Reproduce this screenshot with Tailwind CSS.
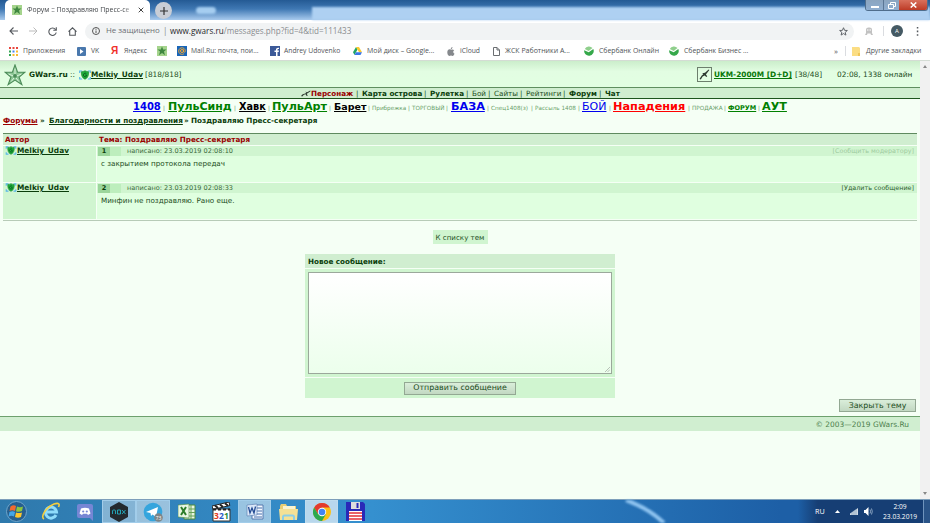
<!DOCTYPE html>
<html lang="ru">
<head>
    <meta charset="UTF-8">
    <meta name="viewport" content="width=device-width, initial-scale=1.0">
    <title>Форум :: Поздравляю Пресс-секретаря</title>
    <script src="https://cdn.jsdelivr.net/npm/@tailwindcss/browser@4"></script>
</head>
<body class="w-[930px] h-[523px] overflow-hidden flex flex-col whitespace-nowrap bg-[#f5fff5] font-['Open_Sans','Noto_Sans',sans-serif]">

    <!-- Shared icons -->
    <svg class="hidden">
        <symbol id="star" viewBox="0 0 24 24">
            <path d="M12 1l2.800 8h8l-6.300 5.300 3 8.200-7.500-5-7.500 5 3-8.200L1.200 9h8z" fill="#8cc795" stroke="#4b8b58" stroke-width="1.200"/>
            <path d="M12 5v6M5 11l5 2M19 11l-5 2M8 19l3-4M16 19l-3-4" stroke="#e2f8e2" fill="none"/>
            <circle cx="12" cy="13" r="2" fill="#4b8b58"/>
        </symbol>
        <symbol id="favicon" viewBox="0 0 10 10">
            <path d="M0 0h10v10H0z" fill="#a5d48d"/>
            <path d="M5 .5l1.200 3h3.300L7 5.500l1 3.800-3-2.200-3 2.200 1-3.800L.5 3.500h3.300z" fill="#3f8740"/>
        </symbol>
        <symbol id="shield" viewBox="0 0 12 10">
            <path d="M.7 3V1h2.500M8.800 1h2.500v2M.7 7v2h2.500M8.800 9h2.500V7" fill="none" stroke="#59b5e8" stroke-width="1.200"/>
            <path d="M6 .7c1.500.8 2.500 1 3.600 1C9.800 5 9 8 6 9.300 3 8 2.200 5 2.400 1.700c1.100 0 2.100-.2 3.600-1z" fill="#1fae3d" stroke="#128028" stroke-width=".6"/>
            <path d="M7.400 3.700a1.800 1.800 0 1 0 0 2.600V5H6.200" fill="none" stroke="#07551a" stroke-width=".8"/>
        </symbol>
        <symbol id="rifle" viewBox="0 0 12 8">
            <path d="M0 7l2-2 3-1 6-3.500.5.7L7 4.200 8 7H6.800L5.500 5 3.500 5.500 1.500 7.500zM5 2l3 .5-1 1z" fill="#2d3a30"/>
        </symbol>
        <symbol id="rifle-up" viewBox="0 0 12 12">
            <path d="M.5 11l2.500-4 2-1.500L10.500.5l.8.600L7.500 6l1.500 2-1 .8L6.200 7 4 8.200 2 11.500zM3.500 4.500l3-.5-1.500 2z" fill="#2d3a30"/>
        </symbol>
        <symbol id="sber" viewBox="0 0 10 10">
            <path d="M.2 4.200L4.700 6.300 9.300 3a4.800 4.800 0 1 1-9.100 1.200z" fill="#35a84a"/>
            <path d="M.8 3L4.700 5 8.500 2A4.800 4.800 0 0 0 .8 3z" fill="#8fcf8c"/>
        </symbol>
    </svg>

    <!-- Window title and tabs -->
    <div class="relative h-[20px] shrink-0 flex items-end bg-linear-to-b from-[#245a94] via-[#3f78b3] via-45% to-[#a9cbee] pl-[5px]">
        <div class="absolute left-[312px] right-0 top-[7px] bottom-0 bg-[#aed0f2] blur-[1px]"></div>
        <div class="absolute left-[196px] top-[7px] w-[20px] h-[7px] rounded-sm bg-[#a5cdf0] blur-[1px]"></div>
        <div class="relative w-[145px] h-[20px] bg-white rounded-t-[5px] flex items-center pl-[7px]">
            <svg class="w-[10px] h-[10px] mr-[5px]"><use href="#favicon"/></svg>
            <span class="w-[107px] text-[6.900px] text-[#45484c] mask-r-from-90%">Форум :: Поздравляю Пресс-се</span>
            <svg class="w-[6px] h-[6px] ml-[4px]" viewBox="0 0 6 6"><path d="M.7.7l4.600 4.600M5.300.7L.7 5.300" stroke="#444"/></svg>
        </div>
        <div class="relative ml-[5px] mb-[1px] w-[17px] h-[17px] rounded-full bg-[#c9ced6] flex items-center justify-center">
            <svg class="w-[8px] h-[8px]" viewBox="0 0 8 8"><path d="M4 0v8M0 4h8" stroke="#333" stroke-width="1.200"/></svg>
        </div>
        <div class="absolute right-[2px] top-0 flex h-[11px] rounded-b-[3px] overflow-hidden border border-t-0 border-[#4f6d8c]">
            <div class="w-[18px] bg-linear-to-b from-[#8ba5c0] to-[#8faed0] border-r border-[#5a7695] flex items-end justify-center pb-[2px]"><i class="w-[8px] h-[2px] bg-white"></i></div>
            <div class="w-[15px] bg-linear-to-b from-[#8ba5c0] to-[#8faed0] flex items-center justify-center">
                <svg class="w-[8px] h-[7px]" viewBox="0 0 8 7"><path d="M2.500 2V.5h5v4H6M.5 2.500H5.500v4h-5z" fill="none" stroke="#fff"/></svg>
            </div>
            <div class="w-[28px] bg-linear-to-b from-[#d8705c] to-[#bd3a25] flex items-center justify-center">
                <svg class="w-[7px] h-[6px]" viewBox="0 0 7 6"><path d="M.7.5l5.600 5M6.300.5L.7 5.500" stroke="#fff" stroke-width="1.500"/></svg>
            </div>
        </div>
    </div>

    <!-- Toolbar -->
    <div class="h-[22px] shrink-0 bg-white flex items-center pl-[9px] pr-[9px]">
        <svg class="w-[9px] h-[8px] mr-[11px]" viewBox="0 0 9 8"><path d="M9 4H1M4.500.5L1 4l3.500 3.500" fill="none" stroke="#55595e" stroke-width="1.100"/></svg>
        <svg class="w-[9px] h-[8px] mr-[10px]" viewBox="0 0 9 8"><path d="M0 4h8M4.500.5L8 4 4.500 7.500" fill="none" stroke="#bbb"/></svg>
        <svg class="w-[9px] h-[9px] mr-[11px]" viewBox="0 0 9 9"><path d="M7.500 2.500A3.700 3.700 0 1 0 8.200 5.500M8.300.3v3H5.300" fill="none" stroke="#55595e" stroke-width="1.100"/></svg>
        <svg class="w-[9px] h-[9px] mr-[8px]" viewBox="0 0 9 9"><path d="M.5 4.700L4.500.8l4 3.900M1.700 4v4.300h5.600V4" fill="none" stroke="#55595e" stroke-width="1.100"/></svg>
        <div class="w-[769px] h-[17px] rounded-full bg-[#f1f3f4] flex items-center pl-[7px] text-[8.100px]">
            <svg class="w-[8px] h-[8px] mr-[6px]" viewBox="0 0 8 8"><circle cx="4" cy="4" r="3.500" fill="none" stroke="#555"/><path d="M4 3.500V6M4 1.800v1" stroke="#555"/></svg>
            <span class="w-[57px] text-[7.900px] text-[#6b6f73]">Не защищено</span>
            <span class="w-[7px] text-[#888]">|</span>
            <span class="text-[#8a8d90]"><span class="text-[#26282b]">www.gwars.ru</span>/messages.php?fid=4&amp;tid=111433</span>
            <svg class="w-[9px] h-[9px] ml-auto mr-[6px]" viewBox="0 0 10 10"><path d="M5 .8l1.200 2.900 3.100.2-2.400 2 .8 3.100L5 7.300 2.300 9l.8-3.100-2.400-2 3.100-.2z" fill="none" stroke="#5f6368" stroke-width="1.100"/></svg>
        </div>
        <svg class="w-[8px] h-[8px] ml-[11px]" viewBox="0 0 8 8"><path d="M1 6V2.500A2.500 2 0 0 1 3.500.5h1A2.500 2 0 0 1 7 2.500V6l1 2H6L5.500 6.500h-3L2 8H0z" fill="#c2c2c2"/><path d="M2 3h1.500M4.500 3H6" stroke="#fff"/></svg>
        <i class="w-px h-[10px] bg-[#dadce0] ml-[10px]"></i>
        <div class="w-[12px] h-[12px] ml-[7px] rounded-full bg-[#455a64] text-white text-[6px] flex items-center justify-center">A</div>
        <svg class="w-[3px] h-[9px] ml-auto mr-[2px]" viewBox="0 0 3 9"><path d="M.8 0h1.500v1.600H.8zM.8 3.600h1.500v1.600H.8zM.8 7.200h1.500v1.600H.8z" fill="#55595e"/></svg>
    </div>

    <!-- Bookmarks -->
    <div class="h-[19px] shrink-0 bg-white border-b border-[#d4dcd4] flex items-center pl-[9px] text-[6.750px] text-[#505357]">
        <div class="w-[68px] flex items-center gap-[5px]">
            <svg class="w-[9px] h-[9px]" viewBox="0 0 9 9"><path d="M0 0h2v2H0zM3.500 0h2v2h-2zM7 0h2v2H7z" fill="#e8453c"/><path d="M0 3.500h2v2H0z" fill="#34a853"/><path d="M3.500 3.500h2v2h-2z" fill="#4285f4"/><path d="M7 3.500h2v2H7zM3.500 7h2v2h-2zM7 7h2v2H7z" fill="#f9bb2d"/><path d="M0 7h2v2H0z" fill="#34a853"/></svg>
            Приложения
        </div>
        <div class="w-[34px] flex items-center gap-[5px]">
            <svg class="w-[9px] h-[9px]" viewBox="0 0 9 9"><rect width="9" height="9" rx="1" fill="#4a78ad"/><path d="M3 2l3.500 2.500L3 7z" fill="#fff"/></svg>
            VK
        </div>
        <div class="w-[46px] flex items-center gap-[6px]">
            <span class="w-[7px] text-[10px] leading-none font-bold text-[#f0302a] font-['Liberation_Sans',sans-serif]">Я</span>
            Яндекс
        </div>
        <div class="w-[20px]"><svg class="w-[10px] h-[10px]"><use href="#favicon"/></svg></div>
        <div class="w-[93px] flex items-center gap-[4px]">
            <svg class="w-[10px] h-[10px]" viewBox="0 0 10 10"><path d="M0 0h10v10H0z" fill="#1865b8"/><circle cx="5" cy="5" r="1.500" fill="none" stroke="#fda92a"/><path d="M6.500 3.500v2.300c.8 1 1.800.3 1.800-1A3.300 3.300 0 1 0 7 7.700" fill="none" stroke="#fda92a" stroke-width=".9"/></svg>
            Mail.Ru: почта, пои...
        </div>
        <div class="w-[83px] flex items-center gap-[4px]">
            <svg class="w-[10px] h-[10px]" viewBox="0 0 10 10"><path d="M0 0h10v10H0z" fill="#3b5998"/><path d="M6 10V6h-1.500V4.500H6c-.2-2 .5-3 3-2.800V3C7.500 3 7.500 3.200 7.500 4.500H9L8.700 6H7.500v4z" fill="#fff"/></svg>
            Andrey Udovenko
        </div>
        <div class="w-[94px] flex items-center gap-[5px]">
            <svg class="w-[9px] h-[8px]" viewBox="0 0 9 8"><path d="M3 0L0 5.300 1.500 8 4.500 2.600z" fill="#1fa463"/><path d="M3 0h3l3 5.300H6z" fill="#fbca2e"/><path d="M1.500 8L3 5.300h6L7.500 8z" fill="#3b77e7"/></svg>
            <span class="text-[6.950px]">Мой диск – Google...</span>
        </div>
        <div class="w-[46px] flex items-center gap-[5px]">
            <svg class="w-[8px] h-[9px]" viewBox="0 0 8 9"><path d="M5.500 0c.1 1.200-.7 2-1.700 2.100C3.700 1 4.500.2 5.500 0zM7.500 6.800C7 8 6.500 9 5.600 9c-.7 0-.9-.4-1.600-.4S3 9 2.400 9C1 9 .3 7 .3 5.300c0-2.700 2-3.500 3.700-2.600 1.100-.6 2.500-.3 3.200.6-1.500.9-1.200 2.900.3 3.500z" fill="#85888c"/></svg>
            iCloud
        </div>
        <div class="w-[91px] flex items-center gap-[5px]">
            <svg class="w-[7px] h-[9px]" viewBox="0 0 7 9"><path d="M.5.5H4L6.500 3v5.500h-6zM4 .5V3h2.500" fill="none" stroke="#6b6e72"/></svg>
            <span class="text-[7px]">ЖСК Работники А...</span>
        </div>
        <div class="w-[85px] flex items-center gap-[5px]">
            <svg class="w-[10px] h-[10px]"><use href="#sber"/></svg>
            <span class="text-[6.850px]">Сбербанк Онлайн</span>
        </div>
        <div class="flex items-center gap-[5px]">
            <svg class="w-[10px] h-[10px]"><use href="#sber"/></svg>
            <span class="text-[6.850px]">Сбербанк Бизнес ...</span>
        </div>
        <div class="ml-auto mr-[9px] flex items-center">
            <span class="w-[11px] text-[8px]">»</span>
            <i class="w-px h-[10px] bg-[#dadce0] mr-[6px]"></i>
            <svg class="w-[8px] h-[9px] mr-[6px]" viewBox="0 0 8 9"><path d="M0 0h7l1 1v8H0z" fill="#fbdd83"/><path d="M6 6h2v3H6z" fill="#efc558"/></svg>
            <span class="w-[55px] text-[6.850px]">Другие закладки</span>
        </div>
    </div>

    <!-- Page -->
    <div class="h-[438px] shrink-0 flex">
        <main class="w-[920px] font-['DejaVu_Sans',Verdana,sans-serif] text-[7.200px] leading-none text-[#1b4d1b]">

            <!-- Header -->
            <div class="h-[26px] bg-linear-to-b from-[#cbedcb] via-[#e2fde2] via-40% to-[#e2ffe2] flex items-center pl-[4px] pt-px text-[7.400px]">
                <svg class="w-[22px] h-[22px] mr-[3px]"><use href="#star"/></svg>
                <b class="w-[41px] text-[#0b3d0b]">GWars.ru</b>
                <span class="w-[9px]">::</span>
                <svg class="w-[12px] h-[10px]"><use href="#shield"/></svg>
                <a href="#" class="w-[54px] font-bold underline text-[#0b3d0b]">Melkiy_Udav</a>
                <span>[818/818]</span>
                <span class="ml-auto mr-[2px] w-[15px] h-[15px] border border-[#6d7f6d] flex items-center justify-center">
                    <svg class="w-[11px] h-[11px]"><use href="#rifle-up"/></svg>
                </span>
                <a href="#" class="w-[81px] font-bold underline text-[#087708]">UKM-2000M [D+D]</a>
                <span class="w-[42px]">[38/48]</span>
                <span class="w-[83px]">02:08, 1338 онлайн</span>
            </div>

            <!-- Main menu -->
            <nav class="h-[12px] bg-[#d0eed0] border-t border-t-[#5f8f5f] border-b border-b-[#1d541d] flex items-center pl-[301px] pt-px text-[7.200px]">
                <svg class="w-[10px] h-[7px]"><use href="#rifle"/></svg>
                <b class="w-[45px] text-[#990000]">Персонаж</b>
                <span class="w-[6px]">|</span><b class="w-[62px] text-[#0b3d0b]">Карта острова</b>
                <span class="w-[6px]">|</span><b class="w-[36px] text-[#0b3d0b]">Рулетка</b>
                <span class="w-[6px]">|</span><span class="w-[16px]">Бой</span>
                <span class="w-[6px]">|</span><span class="w-[26px]">Сайты</span>
                <span class="w-[6px]">|</span><span class="w-[37px]">Рейтинги</span>
                <span class="w-[6px]">|</span><b class="w-[30px] text-[#0b3d0b]">Форум</b>
                <span class="w-[6px]">|</span><b class="text-[#0b3d0b]">Чат</b>
            </nav>

            <!-- Quick links -->
            <div class="h-[15px] flex items-baseline pl-[133px] pt-[2px] text-[5.700px] text-[#69a069]">
                <a href="#" class="w-[30px] text-[10px] font-bold underline text-[#0000ee]">1408</a>
                <span class="w-[5px]">|</span><a href="#" class="w-[66px] text-[11px] font-bold underline text-[#008000]">ПульСинд</a>
                <span class="w-[5px]">|</span><a href="#" class="w-[29px] text-[9.700px] font-bold underline text-black">Хавк</a>
                <span class="w-[4px]">|</span><a href="#" class="w-[57px] text-[11.200px] font-bold underline text-[#008000]">ПульАрт</a>
                <span class="w-[5px]">|</span><a href="#" class="w-[34px] text-[9.500px] font-bold underline text-black">Барет</a>
                <span class="w-[4px]">|</span><span class="w-[36px]">Прибрежка</span>
                <span class="w-[4px]">|</span><span class="w-[34px]">ТОРГОВЫЙ</span>
                <span class="w-[5px]">|</span><a href="#" class="w-[36px] text-[11.200px] font-bold underline text-[#0000ee]">БАЗА</a>
                <span class="w-[4px]">|</span><span class="w-[40px]">Спец1408(з)</span>
                <span class="w-[4px]">|</span><span class="w-[43px]">Рассыль 1408</span>
                <span class="w-[4px]">|</span><a href="#" class="w-[27px] text-[11px] underline text-[#0000ee]">БОЙ</a>
                <span class="w-[4px]">|</span><a href="#" class="w-[75px] text-[11.300px] font-bold underline text-[#ff0000]">Нападения</a>
                <span class="w-[4px]">|</span><span class="w-[32px]">ПРОДАЖА</span>
                <span class="w-[4px]">|</span><a href="#" class="w-[30px] text-[6.500px] font-bold underline text-[#008000]">ФОРУМ</a>
                <span class="w-[4px]">|</span><a href="#" class="text-[11.200px] font-bold underline text-[#008000]">АУТ</a>
            </div>

            <!-- Breadcrumbs -->
            <div class="h-[19px] pl-[3px] pt-[3px] flex font-bold text-[7.250px] text-[#0b3d0b]">
                <a href="#" class="w-[37px] underline text-[#990000]">Форумы</a>
                <span class="w-[9px]">»</span>
                <a href="#" class="w-[135px] underline">Благодарности и поздравления</a>
                <span class="w-[7px]">»</span>
                <span>Поздравляю Пресс-секретаря</span>
            </div>

            <!-- Topic -->
            <section class="mx-[3px] w-[914px] h-[88px] border-t border-[#5f8a5f] border-b border-b-[#b7cbb7] flex flex-col gap-px">
                <div class="h-[11px] bg-[#d0eed0] flex items-center pl-[2px] pt-px font-bold text-[#990000]">
                    <span class="w-[94px]">Автор</span>
                    <span>Тема: Поздравляю Пресс-секретаря</span>
                </div>
                <div class="h-[36px] flex gap-px">
                    <div class="w-[93px] bg-[#d0f5d0] flex items-start pl-[2px]">
                        <svg class="w-[12px] h-[9px]"><use href="#shield"/></svg>
                        <a href="#" class="font-bold underline text-[7.400px] text-[#0b3d0b] pt-px">Melkiy_Udav</a>
                    </div>
                    <div class="flex-1 bg-[#e0ffe0]">
                        <div class="h-[10px] bg-[#d0f5d0] flex items-center text-[6.550px] text-[#3c6b3c] pl-px pr-[3px]">
                            <b class="w-[12px] h-[9px] bg-[#9bd69b] flex items-center justify-center text-[#0b3d0b]">1</b>
                            <i class="w-[11px] h-[9px] bg-[#bdeebd] mr-[6px]"></i>
                            <span>написано: 23.03.2019 02:08:10</span>
                            <span class="ml-auto text-[#9fcb9f] text-[6.400px]">[Сообщить модератору]</span>
                        </div>
                        <p class="pl-[4px] pt-[4px]">с закрытием протокола передач</p>
                    </div>
                </div>
                <div class="h-[36px] flex gap-px">
                    <div class="w-[93px] bg-[#d0f5d0] flex items-start pl-[2px]">
                        <svg class="w-[12px] h-[9px]"><use href="#shield"/></svg>
                        <a href="#" class="font-bold underline text-[7.400px] text-[#0b3d0b] pt-px">Melkiy_Udav</a>
                    </div>
                    <div class="flex-1 bg-[#e0ffe0]">
                        <div class="h-[10px] bg-[#d0f5d0] flex items-center text-[6.550px] text-[#3c6b3c] pl-px pr-[3px]">
                            <b class="w-[12px] h-[9px] bg-[#9bd69b] flex items-center justify-center text-[#0b3d0b]">2</b>
                            <i class="w-[11px] h-[9px] bg-[#bdeebd] mr-[6px]"></i>
                            <span>написано: 23.03.2019 02:08:33</span>
                            <span class="ml-auto text-[#2f5f2f] text-[6.400px]">[Удалить сообщение]</span>
                        </div>
                        <p class="pl-[4px] pt-[4px]">Минфин не поздравляю. Рано еще.</p>
                    </div>
                </div>
            </section>

            <div class="mt-[9px] mx-auto w-[55px] h-[14px] bg-[#d0f5d0] flex items-center justify-center pt-px text-[7.100px]">К списку тем</div>

            <!-- New message -->
            <form class="mt-[10px] mx-auto w-[310px] flex flex-col gap-px">
                <div class="h-[14px] bg-[#d0eed0] flex items-center pl-[3px] pt-px font-bold text-[#0b3d0b]">Новое сообщение:</div>
                <div class="relative h-[108px] bg-[#d0f5d0] px-[3px] pt-[3px]">
                    <textarea class="block w-[304px] h-[102px] resize-none bg-linear-to-b from-white to-[#ecffec] border border-[#9ba89b]"></textarea>
                    <svg class="absolute right-[5px] bottom-[5px] w-[5px] h-[5px]" viewBox="0 0 5 5"><path d="M0 5l5-5M2.500 5L5 2.500" stroke="#a0a8a0" stroke-width=".7"/></svg>
                </div>
                <div class="h-[20px] bg-[#d0f5d0] flex items-center justify-center">
                    <button type="button" class="w-[112px] h-[13px] border border-[#93a893] bg-linear-to-b from-[#daeeda] to-[#c2d8c2] text-[7.900px] leading-none text-[#1b4d1b]">Отправить сообщение</button>
                </div>
            </form>

            <div class="h-[18px] flex justify-end pt-[1px] pr-[4px]">
                <button type="button" class="w-[77px] h-[13px] border border-[#93a893] bg-linear-to-b from-[#daeeda] to-[#c2d8c2] text-[7.900px] leading-none text-[#1b4d1b]">Закрыть тему</button>
            </div>
            <footer class="h-[15px] border-t border-[#6da06d] bg-[#d0eed0] flex items-center justify-end pr-[11px] pt-px text-[7.450px] text-[#4e7f4e]">© 2003—2019 GWars.Ru</footer>
        </main>

        <!-- Scrollbar -->
        <div class="w-[10px] bg-[#f1f1f1] flex flex-col justify-between items-center py-[4px]">
            <svg class="w-[4px] h-[3px]" viewBox="0 0 4 3"><path d="M2 0l2 3H0z" fill="#888"/></svg>
            <svg class="w-[4px] h-[3px]" viewBox="0 0 4 3"><path d="M0 0h4L2 3z" fill="#888"/></svg>
        </div>
    </div>

    <!-- Taskbar -->
    <div class="relative h-[24px] shrink-0 border-t border-[#7d9fba] bg-linear-to-r from-[#2f79ac] via-[#3590cf] via-40% to-[#1d5fa6] to-84% flex items-center text-white text-[6.800px]">
        <svg class="absolute left-[610px] top-0 w-[70px] h-[23px] blur-[1px]" viewBox="0 0 70 23"><path d="M16 0Q38 8 54 23" fill="none" stroke="#8fc4f0" stroke-width="4"/></svg>
        <div class="absolute right-0 top-0 h-full w-[132px] bg-linear-to-r from-transparent to-[#163e74] to-15%"></div>
        <div class="w-[33px] flex justify-center">
            <svg class="w-[21px] h-[21px]" viewBox="0 0 21 21"><circle cx="10.500" cy="10.500" r="10" fill="#265f8f" stroke="#6fa5cb"/><path d="M4.500 5.500q3-2 5.500-.5L9 10q-3-1.500-5.500 0z" fill="#f26a2e"/><path d="M11 5.500q3 1.500 6 0l-1 4.500q-3 1.500-6 .3z" fill="#8cc63f"/><path d="M3.500 11q3-1.500 5.500 0l-1 4.500q-2.500-1.500-5.500 0z" fill="#42a6e8"/><path d="M10 11.500q3 1 6 0l-1 4.500q-3 1.500-6 0z" fill="#fdc52c"/></svg>
        </div>
        <div class="w-[35px] flex justify-center">
            <svg class="w-[20px] h-[19px]" viewBox="0 0 20 19"><path d="M15 13A5.500 5.500 0 1 1 15.500 10H6" fill="none" stroke="#8fdcfb" stroke-width="3"/><path d="M3 17C-1 15 5 5 13 2c5-1.500 6 0 4.500 3" fill="none" stroke="#f6ce3c" stroke-width="1.600"/></svg>
        </div>
        <div class="w-[34px] flex justify-center">
            <svg class="w-[16px] h-[18px]" viewBox="0 0 16 18"><path d="M2 1h12q2 0 2 2v15l-3-3H2q-2 0-2-2V3q0-2 2-2z" fill="#7686d4"/><path d="M4 5.500q4-1.500 8 0l1.500 5L11 12l-1-1.200H6L5 12l-2.500-1.500z" fill="#fff"/><circle cx="6.200" cy="8.500" r="1.100" fill="#7686d4"/><circle cx="9.800" cy="8.500" r="1.100" fill="#7686d4"/></svg>
        </div>
        <div class="w-[34px] h-full flex items-center justify-center border border-[#a2cdea] bg-white/40">
            <svg class="w-[18px] h-[20px]" viewBox="0 0 18 20"><path d="M9 0l9 5v10l-9 5-9-5V5z" fill="#23292e"/><path d="M2.500 12V9q0-1 1-1h1q1 0 1 1v3M7.500 8h3v4h-3zM12 8l3.500 4M15.500 8L12 12" fill="none" stroke="#23b0c4" stroke-width=".9"/></svg>
        </div>
        <div class="w-[34px] h-full flex items-center justify-center border border-[#a2cdea] bg-white/50">
            <svg class="w-[20px] h-[20px]" viewBox="0 0 20 20"><circle cx="10" cy="10" r="9.300" fill="#35a5dd"/><path d="M3 10l12-5-2 10-3.500-2.500L8 14l-.5-3z" fill="#fff"/><circle cx="15.500" cy="15.500" r="4.300" fill="#7d8588"/><text x="15.500" y="17.500" font-size="5" text-anchor="middle" fill="#fff">73</text></svg>
        </div>
        <div class="w-[34px] flex justify-center">
            <svg class="w-[18px] h-[18px]" viewBox="0 0 18 18"><path d="M6 2h11v14H6z" fill="#e8f5e2" stroke="#4c8a3f"/><path d="M8 6h9M8 9.500h9M8 13h9M13 2v14" stroke="#66a356"/><path d="M0 2l11-1v14L0 14z" fill="#e9f6e3" stroke="#4c8a3f" stroke-width=".6"/><path d="M3 4l5 8M8 4l-5 8" stroke="#2d7d2b" stroke-width="2"/></svg>
        </div>
        <div class="w-[34px] flex justify-center">
            <svg class="w-[19px] h-[20px]" viewBox="0 0 19 20"><path d="M0 4l17-4 .8 3.500L1 7.500z" fill="#fff" stroke="#222"/><path d="M3 3.500L6 6M8 2.500L11 5M13 1.200l3 2.500" stroke="#222" stroke-width="2"/><path d="M1 7h17v12H1z" fill="#fff" stroke="#333"/><path d="M1 7.500h17" stroke="#222" stroke-width="2" stroke-dasharray="3 2"/><text x="2" y="17" font-size="8.500" font-weight="bold" fill="#e33822">3</text><text x="7" y="17" font-size="8.500" font-weight="bold" fill="#2857c5">2</text><text x="12" y="17" font-size="8.500" font-weight="bold" fill="#278d37">1</text></svg>
        </div>
        <div class="w-[33px] h-full flex items-center justify-center border border-[#a2cdea] bg-white/50">
            <svg class="w-[18px] h-[18px]" viewBox="0 0 18 18"><path d="M6 2h11v14H6z" fill="#f2f7ff" stroke="#5579ad"/><path d="M11 5h5M11 8h5M11 11h5M8 14h8" stroke="#4971ad"/><path d="M1 2l10-1v11L1 13z" fill="#dce9fa" stroke="#5579ad" stroke-width=".6"/><path d="M2.500 4l1.500 6 2-5 2 5L9.500 3.500" fill="none" stroke="#254c94" stroke-width="1.300"/></svg>
        </div>
        <div class="w-[34px] flex justify-center">
            <svg class="w-[19px] h-[18px]" viewBox="0 0 19 18"><path d="M1 3l1-2h5l1 2h9v14H1z" fill="#e8ce74"/><path d="M4 3h12v5H4z" fill="#f9f3d0"/><path d="M0 6h19l-1 11H1z" fill="#f4e196"/><path d="M4 17v-3q0-1.500 1.500-1.500h8q1.500 0 1.500 1.500v3" fill="none" stroke="#8bcfe9" stroke-width="2"/></svg>
        </div>
        <div class="w-[33px] h-full flex items-center justify-center border border-[#bfdcee] bg-white/65">
            <svg class="w-[18px] h-[18px]" viewBox="0 0 18 18"><circle cx="9" cy="9" r="9" fill="#fbc116"/><path d="M1.200 4.500A9 9 0 0 1 16.800 4.500H9L5.100 11.200z" fill="#e33b2e"/><path d="M1.200 4.500L5.100 11.200 12.900 11.200 9 18A9 9 0 0 1 1.200 4.500z" fill="#2da94f"/><circle cx="9" cy="9" r="4.200" fill="#fff"/><circle cx="9" cy="9" r="3.300" fill="#4285f4"/></svg>
        </div>
        <div class="w-[34px] flex justify-center">
            <svg class="w-[19px] h-[19px]" viewBox="0 0 19 19"><path d="M0 0h17l2 2v17H0z" fill="#2929b8"/><path d="M5 0h9v7H5z" fill="#ddd"/><path d="M10.500 1h2v5h-2z" fill="#2929b8"/><path d="M3 9h13v10H3z" fill="#fff"/><path d="M3 11h13M3 14h13M3 17h13" stroke="#e22f39" stroke-width="1.600"/></svg>
        </div>
        <div class="relative ml-auto flex items-center h-full">
            <span class="w-[20px] text-[7.200px]">RU</span>
            <svg class="w-[5px] h-[3px] mr-[10px]" viewBox="0 0 5 3"><path d="M2.500 0L5 3H0z" fill="#fff"/></svg>
            <svg class="w-[8px] h-[7px] mr-[6px]" viewBox="0 0 8 7"><path d="M0 7V5.500L8 0v7z" fill="#cfdae5"/><path d="M2 7V4M4 7V2.500M6 7V1" stroke="#55789e" stroke-width=".5"/></svg>
            <svg class="w-[9px] h-[9px] mr-[10px]" viewBox="0 0 9 9"><path d="M0 3h1.500L4.500 0v9L1.500 6H0z" fill="#fff"/><path d="M6 2.500q1.200 2 0 4M7.500 1.500q1.600 3 0 6" fill="none" stroke="#b9cde0" stroke-width=".7"/></svg>
            <div class="w-[34px] mr-[6px] text-center text-[6.700px] leading-[10px]">2:09<br>23.03.2019</div>
            <i class="w-[7px] h-full border-l border-[#6f94bd] bg-[#2a5488]"></i>
        </div>
    </div>
</body>
</html>
